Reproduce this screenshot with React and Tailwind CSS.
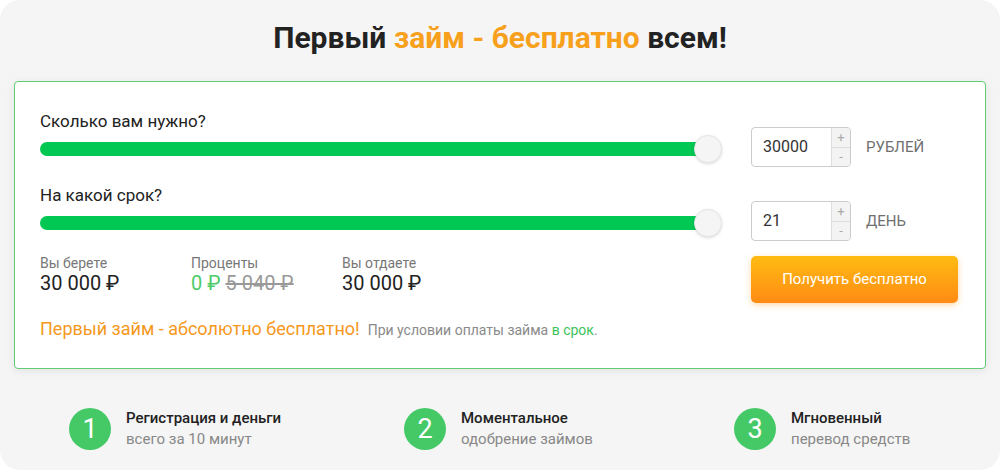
import { useState } from "react";

function Slider({ value }) {
  return (
    <div className="relative h-[28px] flex items-center">
      <div className="h-[14px] w-[668px] rounded-full bg-[#00c853]" />
      {/* ползунок */}
      <div
        className="absolute top-0 h-[28px] w-[28px] rounded-full bg-[#f5f5f5] border border-[#e6e6e6] shadow-[0_1px_3px_rgba(0,0,0,0.15)]"
        style={{ left: `${value * 6.54}px` }}
      />
    </div>
  );
}

function Stepper({ value, unit }) {
  return (
    <div className="flex items-center">
      <div className="flex h-[40px] w-[100px] rounded-[4px] border border-[#cccccc] bg-white overflow-hidden">
        <div className="flex-1 flex items-center pl-[11px] text-[16px] text-[#333]">
          {value}
        </div>
        <div className="w-[19px] flex flex-col border-l border-[#dddddd] bg-[#f3f3f3] text-[#aaa] text-[13px] leading-none">
          <div className="flex-1 flex items-center justify-center border-b border-[#dddddd]">+</div>
          <div className="flex-1 flex items-center justify-center">-</div>
        </div>
      </div>
      <span className="ml-[15px] text-[15px] text-[#707070] uppercase">{unit}</span>
    </div>
  );
}

const steps = [
  { n: 1, title: "Регистрация и деньги", sub: "всего за 10 минут", w: "w-[335px]" },
  { n: 2, title: "Моментальное", sub: "одобрение займов", w: "w-[330px]" },
  { n: 3, title: "Мгновенный", sub: "перевод средств", w: "w-[250px]" },
];

export default function App() {
  const [summa] = useState(30000);
  const [srok] = useState(21);

  return (
    <div className="w-[1000px] h-[470px] bg-white font-['Roboto',sans-serif]">
      <div className="h-full rounded-[20px] bg-[#f5f5f5] pt-[20px]">
        {/* Заголовок */}
        <h1 className="text-center text-[30px] leading-[36px] font-bold text-[#222]">
          Первый <span className="text-[#f7a01c]">займ - бесплатно</span> всем!
        </h1>

        {/* Калькулятор */}
        <div className="mx-[14px] mt-[25px] rounded-[4px] border border-[#62cc74] bg-white px-[25px] pt-[26px] pb-[27px] shadow-[0_2px_10px_rgba(0,0,0,0.08)]">
          <div className="flex">
            <div className="w-[682px]">
              <div className="mt-[2px] text-[17px] leading-[22px] text-[#222]">Сколько вам нужно?</div>
              <div className="mt-[3px]">
                <Slider value={100} />
              </div>
            </div>
            <div className="ml-[29px] mt-[19px]">
              <Stepper value={summa} unit="Рублей" />
            </div>
          </div>

          <div className="flex mt-[15px]">
            <div className="w-[682px]">
              <div className="mt-[2px] text-[17px] leading-[22px] text-[#222]">На какой срок?</div>
              <div className="mt-[3px]">
                <Slider value={100} />
              </div>
            </div>
            <div className="ml-[29px] mt-[19px]">
              <Stepper value={srok} unit="День" />
            </div>
          </div>

          <div className="flex mt-[13px]">
            <div className="w-[682px] flex">
              <div className="w-[151px]">
                <div className="text-[14px] leading-[18px] text-[#777]">Вы берете</div>
                <div className="text-[20px] leading-[22px] text-[#222]">30 000 ₽</div>
              </div>
              <div className="w-[151px]">
                <div className="text-[14px] leading-[18px] text-[#777]">Проценты</div>
                <div className="text-[20px] leading-[22px]">
                  <span className="text-[#4cca68]">0 ₽</span>{" "}
                  <span className="text-[#999] line-through">5 040 ₽</span>
                </div>
              </div>
              <div className="w-[151px]">
                <div className="text-[14px] leading-[18px] text-[#777]">Вы отдаете</div>
                <div className="text-[20px] leading-[22px] text-[#222]">30 000 ₽</div>
              </div>
            </div>
            <div className="ml-[29px] mt-[2px]">
              <button className="h-[47px] w-[207px] rounded-[5px] bg-gradient-to-b from-[#ffbb12] to-[#ff8a14] text-[15px] text-white shadow-[0_2px_6px_rgba(255,150,20,0.35)]">
                Получить бесплатно
              </button>
            </div>
          </div>

          <div className="mt-[14px] flex items-baseline">
            <span className="text-[18px] leading-[24px] text-[#f5981c]">
              Первый займ - абсолютно бесплатно!
            </span>
            <span className="ml-[8px] text-[14px] text-[#8a8a8a]">
              При условии оплаты займа <span className="text-[#3cc35b]">в срок</span>.
            </span>
          </div>
        </div>

        {/* Преимущества */}
        <div className="flex pl-[69px] mt-[39px]">
          {steps.map((s) => (
            <div key={s.n} className={`flex items-center ${s.w}`}>
              <div className="h-[42px] w-[42px] shrink-0 rounded-full bg-[#45c967] flex items-center justify-center text-white text-[27px] leading-none">
                {s.n}
              </div>
              <div className="ml-[15px]">
                <div className="text-[15px] leading-[21px] font-medium text-[#222]">{s.title}</div>
                <div className="text-[15px] leading-[21px] text-[#888]">{s.sub}</div>
              </div>
            </div>
          ))}
        </div>
      </div>
    </div>
  );
}
